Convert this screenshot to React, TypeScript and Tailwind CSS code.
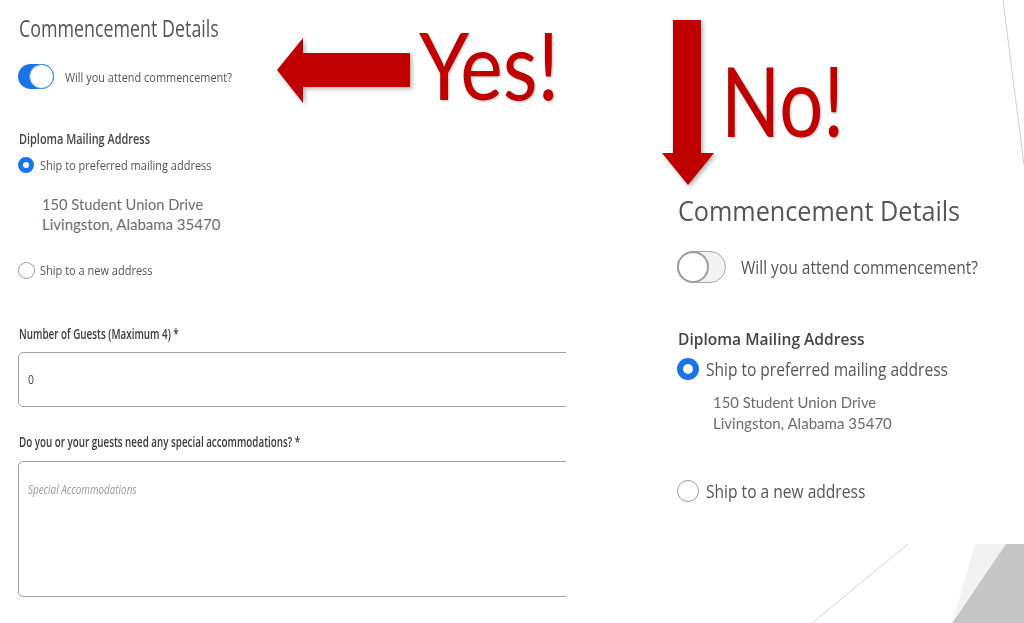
import React from "react";

const OS = { fontFamily: '"Open Sans", "Liberation Sans", sans-serif' };

function Sq({ children, cls }: { children: React.ReactNode; cls: string }) {
  return <span className={"inline-block whitespace-nowrap origin-left " + cls}>{children}</span>;
}

export default function App() {
  return (
    <div
      className="relative w-[1024px] h-[623px] overflow-hidden bg-white flex"
      style={OS}
    >
      {/* Left screenshot */}
      <div className="w-[566px] shrink-0 overflow-hidden pl-[18px] pt-[13px] flex flex-col font-['Open_Sans',sans-serif]">
        <div className="h-[30px] pl-[1px] text-[23px] leading-[30px] text-[#555]">
          <Sq cls="scale-x-[0.776]">Commencement Details</Sq>
        </div>
        <div className="mt-[21px] h-[25px] flex items-center gap-[11px]">
          <div className="relative w-[36px] h-[25px] rounded-full bg-[#1a73e8] shrink-0">
            <div className="absolute right-0 top-0 w-[25px] h-[25px] rounded-full bg-white border-[1.5px] border-[#3d8ef0]" />
          </div>
          <div className="text-[13.5px] leading-[20px] text-[#555]">
            <Sq cls="scale-x-[0.81]">Will you attend commencement?</Sq>
          </div>
        </div>
        <div className="mt-[40px] h-[20px] pl-[1px] text-[14px] leading-[20px] font-semibold text-[#444]">
          <Sq cls="scale-x-[0.78]">Diploma Mailing Address</Sq>
        </div>
        <div className="mt-[6px] h-[20px] flex items-center gap-[6px]">
          <div className="w-[16px] h-[16px] rounded-full border-[5px] border-[#1a73e8] bg-white shrink-0" />
          <div className="text-[13.5px] leading-[20px] text-[#555]">
            <Sq cls="scale-x-[0.815]">Ship to preferred mailing address</Sq>
          </div>
        </div>
        <div className="mt-[19px] pl-[24px] text-[15px] leading-[20px] text-[#6b6b6b] font-['Lato',sans-serif]">
          <div><Sq cls="scale-x-[0.98]">150 Student Union Drive</Sq></div>
          <div><Sq cls="scale-x-[1.0]">Livingston, Alabama 35470</Sq></div>
        </div>
        <div className="mt-[26px] h-[20px] flex items-center gap-[5px]">
          <div className="w-[17px] h-[17px] rounded-full border-[1.5px] border-[#9a9a9a] bg-white shrink-0" />
          <div className="text-[13.5px] leading-[20px] text-[#555]">
            <Sq cls="scale-x-[0.815]">Ship to a new address</Sq>
          </div>
        </div>
        <div className="mt-[44px] h-[20px] pl-[1px] text-[13.5px] leading-[20px] font-semibold text-[#3a3a3a]">
          <Sq cls="scale-x-[0.73]">Number of Guests (Maximum 4) *</Sq>
        </div>
        <div className="mt-[8px] h-[55px] w-[700px] border border-[#a0a0a0] rounded-[5px] flex items-center pl-[9px] text-[13px] text-[#444]">
          <Sq cls="scale-x-[0.8]">0</Sq>
        </div>
        <div className="mt-[25px] h-[20px] pl-[1px] text-[13.5px] leading-[20px] font-semibold text-[#3a3a3a]">
          <Sq cls="scale-x-[0.727]">Do you or your guests need any special accommodations? *</Sq>
        </div>
        <div className="mt-[9px] h-[136px] w-[700px] border border-[#a0a0a0] rounded-[5px] pl-[9px] pt-[17px] text-[13px] leading-[20px] italic text-[#999]">
          <Sq cls="scale-x-[0.76]">Special Accommodations</Sq>
        </div>
      </div>

      {/* Right screenshot */}
      <div className="ml-[111px] flex-1 pt-[193px] flex flex-col">
        <div className="h-[34px] pl-[1px] text-[28px] leading-[34px] text-[#555]">
          <Sq cls="scale-x-[0.9]">Commencement Details</Sq>
        </div>
        <div className="mt-[24px] h-[32px] flex items-center gap-[15px]">
          <div className="relative w-[49px] h-[32px] rounded-full bg-[#f3f3f3] border-[1.5px] border-[#a8a8a8] shrink-0">
            <div className="absolute left-[-1.5px] top-[-1.5px] w-[32px] h-[32px] rounded-full bg-white border-[2px] border-[#9d9d9d]" />
          </div>
          <div className="text-[18px] leading-[24px] text-[#555]">
            <Sq cls="scale-x-[0.862]">Will you attend commencement?</Sq>
          </div>
        </div>
        <div className="mt-[44px] h-[24px] pl-[1px] text-[17px] leading-[24px] font-semibold text-[#444]">
          <Sq cls="scale-x-[0.915]">Diploma Mailing Address</Sq>
        </div>
        <div className="mt-[6px] h-[24px] flex items-center gap-[7px]">
          <div className="w-[22px] h-[22px] rounded-full border-[6px] border-[#1a73e8] bg-white shrink-0" />
          <div className="text-[18px] leading-[24px] text-[#555]">
            <Sq cls="scale-x-[0.862]">Ship to preferred mailing address</Sq>
          </div>
        </div>
        <div className="mt-[10px] pl-[36px] text-[16px] leading-[21px] text-[#6b6b6b] font-['Lato',sans-serif]">
          <div><Sq cls="scale-x-[0.93]">150 Student Union Drive</Sq></div>
          <div><Sq cls="scale-x-[0.94]">Livingston, Alabama 35470</Sq></div>
        </div>
        <div className="mt-[46px] h-[24px] flex items-center gap-[7px]">
          <div className="w-[22px] h-[22px] rounded-full border-[1.5px] border-[#9a9a9a] bg-white shrink-0" />
          <div className="text-[18px] leading-[24px] text-[#555]">
            <Sq cls="scale-x-[0.865]">Ship to a new address</Sq>
          </div>
        </div>
      </div>

      {/* Slide decorations */}
      <svg className="absolute inset-0 pointer-events-none" width="1024" height="623" viewBox="0 0 1024 623">
        <line x1="1003" y1="0" x2="1024" y2="165" stroke="#cfcfcf" strokeWidth="1" />
        <line x1="908" y1="544" x2="812" y2="623" stroke="#d6d6d6" strokeWidth="1" />
        <polygon points="975,544 1006,544 953,620" fill="#f2f2f2" />
        <polygon points="1006,544 1024,544 1024,623 952,623" fill="#c6c6c6" />
      </svg>

      {/* Annotations */}
      <svg
        className="absolute left-[270px] top-[30px] drop-shadow-[2px_2px_2px_rgba(0,0,0,0.3)]"
        width="150"
        height="85"
        viewBox="0 0 150 85"
      >
        <polygon points="7,40 33,8 33,23 140,23 140,57 33,57 33,73" fill="#c00000" />
      </svg>
      <div className="absolute left-[419px] top-[17px] text-[94px] leading-none text-[#c00000] font-['Lato',sans-serif] drop-shadow-[1px_1px_1px_rgba(0,0,0,0.25)]">
        <Sq cls="scale-x-[0.855]">Yes!</Sq>
      </div>
      <svg
        className="absolute left-[655px] top-[15px] drop-shadow-[2px_2px_2px_rgba(0,0,0,0.3)]"
        width="65"
        height="180"
        viewBox="0 0 65 180"
      >
        <polygon points="18,5 46,5 46,138 59,138 33,170 7,138 18,138" fill="#c00000" />
      </svg>
      <div className="absolute left-[721px] top-[52px] text-[96px] leading-none text-[#c00000] font-['Lato',sans-serif] drop-shadow-[1px_1px_1px_rgba(0,0,0,0.25)]">
        <Sq cls="scale-x-[0.81]">No!</Sq>
      </div>
    </div>
  );
}
